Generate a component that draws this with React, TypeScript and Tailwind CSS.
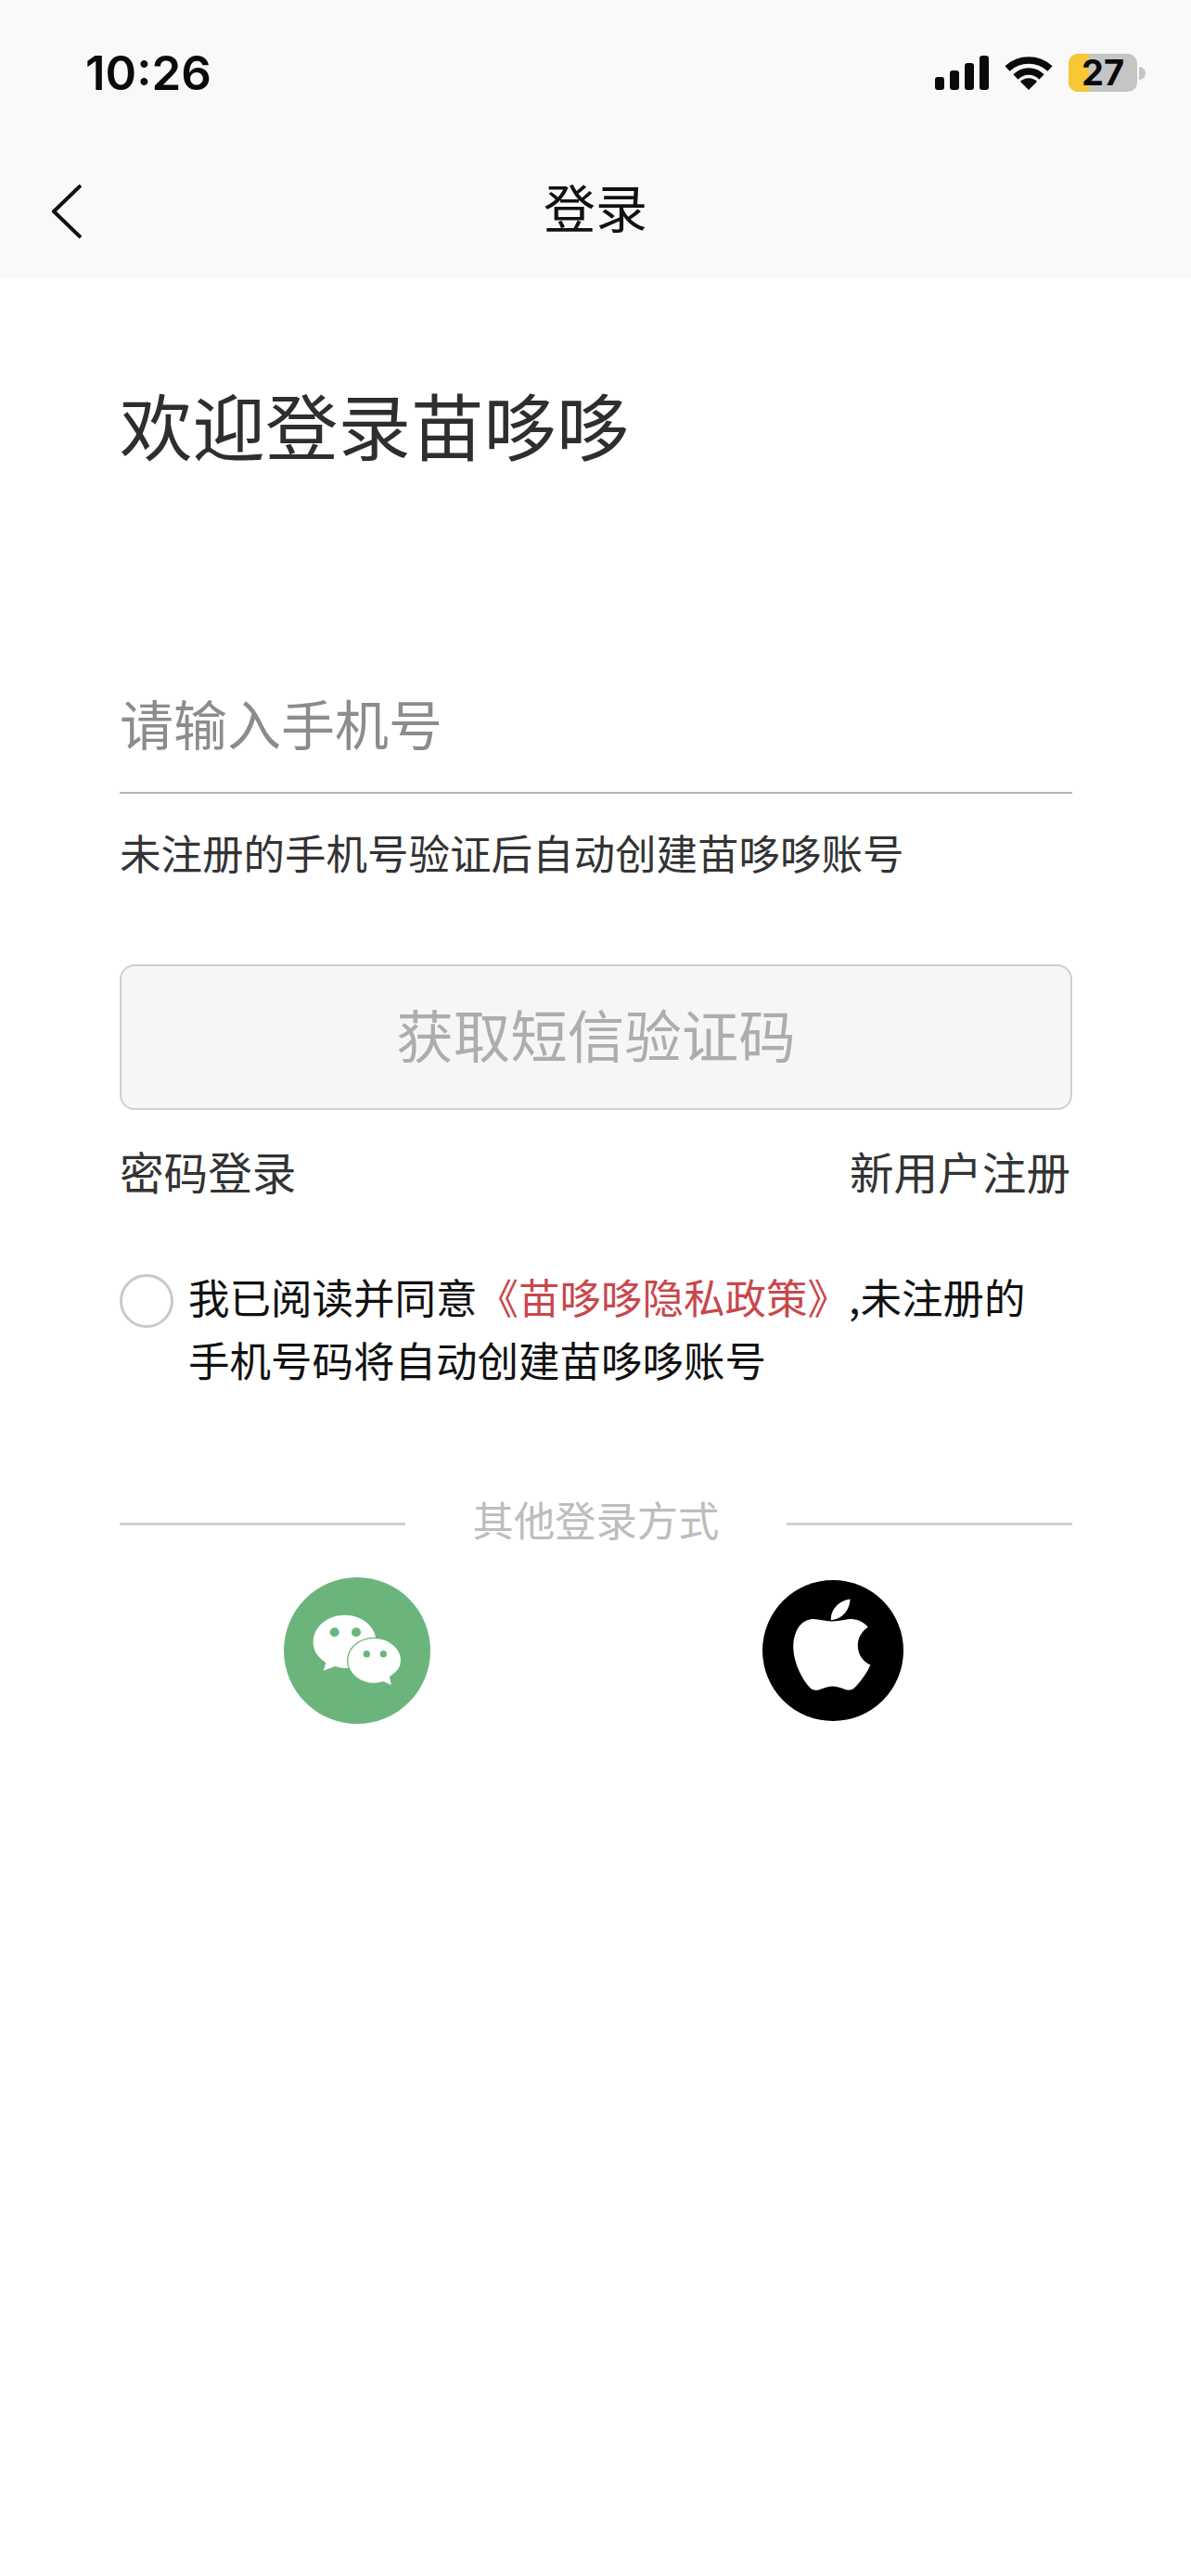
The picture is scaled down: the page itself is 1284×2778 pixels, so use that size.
function SignalIcon() {
  return (
    <svg width="58" height="37" viewBox="0 0 58 37" fill="#0a0a0a">
      <rect x="0" y="23" width="10" height="14" rx="3" />
      <rect x="16" y="16" width="10" height="21" rx="3" />
      <rect x="32" y="8" width="10" height="29" rx="3" />
      <rect x="48" y="0" width="10" height="37" rx="3" />
    </svg>
  );
}

function WifiIcon() {
  return (
    <svg width="52" height="37" viewBox="0 0 52 37" fill="none" stroke="#0a0a0a" strokeWidth="7.5">
      <path d="M3 14 C16 2 36 2 49 14" />
      <path d="M12 23 C20 15 32 15 40 23" />
      <path d="M17 28 L26 37 L35 28 C30 23 22 23 17 28 Z" fill="#0a0a0a" stroke="none" />
    </svg>
  );
}

function Battery() {
  return (
    <div className="flex items-center">
      <div className="relative w-[74px] h-[41px] rounded-[10px] bg-[#c5c5c5] flex items-center justify-center">
        <div className="absolute left-0 top-0 bottom-0 w-[22px] rounded-l-[10px] bg-[#f6c836]" />
        <span className="relative text-[38px] leading-[41px] font-bold text-[#0a0a0a] [font-family:Inter,sans-serif]">27</span>
      </div>
      <div className="w-[7px] h-[14px] ml-[2px] rounded-r-full bg-[#c5c5c5]" />
    </div>
  );
}

function BackChevron() {
  return (
    <svg className="absolute left-[55px] top-[24px]" width="33" height="58" viewBox="0 0 33 58" fill="none" stroke="#111" strokeWidth="4">
      <path d="M32 1 L3 29 L32 57" strokeLinejoin="round" />
    </svg>
  );
}

function WechatLogo() {
  return (
    <svg width="158" height="158" viewBox="48 30 474 474">
      <circle cx="285" cy="267" r="237" fill="#6bb57c" />
      <path d="M245 152 C188 152 143 191 143 240 C143 266 156 288 184 306 L176 332 L214 318 C226 322 236 324 250 324 C300 324 347 290 347 240 C347 191 302 152 245 152 Z" fill="#fff" />
      <path d="M340 226 C290 226 254 260 254 300 C254 340 292 374 340 374 C350 374 360 372 370 369 L398 382 L392 352 C412 340 428 322 428 300 C428 260 390 226 340 226 Z" fill="#fff" stroke="#6bb57c" strokeWidth="4" />
      <circle cx="212" cy="208" r="15" fill="#6bb57c" />
      <circle cx="282" cy="208" r="15" fill="#6bb57c" />
      <circle cx="316" cy="278" r="11" fill="#6bb57c" />
      <circle cx="370" cy="278" r="11" fill="#6bb57c" />
    </svg>
  );
}

function AppleLogo() {
  return (
    <svg width="152" height="152" viewBox="38 38 457 457">
      <circle cx="266.5" cy="266.5" r="228.5" fill="#000" />
      <path d="M262 172 C240 172 215 162 195 165 C160 170 140 205 138 250 C136 300 165 360 195 390 C215 405 235 382 265 382 C295 382 315 405 335 388 C360 365 378 335 388 313 C360 300 347 275 347 250 C347 225 360 205 380 190 C360 168 335 163 315 165 C295 167 280 172 262 172 Z" fill="#fff" />
      <path d="M322 100 C322 130 300 165 260 168 C258 135 285 105 322 100 Z" fill="#fff" />
    </svg>
  );
}

export default function App() {
  return (
    <div className="min-h-[2778px] bg-white text-[#111] [font-family:'Noto_Sans_CJK_SC',sans-serif]">
      {/* Header */}
      <div className="h-[300px] bg-[#f9f9f9] flex flex-col">
        <div className="flex items-center justify-between pl-[92px] pr-[49px] pt-[58px] h-[99px]">
          <span className="text-[51px] leading-none font-semibold text-[#0a0a0a] [font-family:Inter,sans-serif]">10:26</span>
          <div className="flex items-center gap-[17px]">
            <SignalIcon />
            <WifiIcon />
            <Battery />
          </div>
        </div>
        <div className="relative flex items-center justify-center h-[100px] mt-[76px]">
          <BackChevron />
          <h1 className="text-[56px] leading-[70px] font-normal pb-[6px]">登录</h1>
        </div>
      </div>

      {/* Form */}
      <div className="pl-[129px] pr-[128px] pt-[107px]">
        <h2 className="text-[78.5px] leading-[100px] font-normal text-[#2e2e2e]">欢迎登录苗哆哆</h2>

        <div className="mt-[222px] pb-[25px] border-b-2 border-[#b5b5b5]">
          <input
            className="block w-full h-[100px] text-[58px] bg-transparent outline-none placeholder:text-[#8c8c8c]"
            placeholder="请输入手机号"
          />
        </div>
        <p className="mt-[33px] text-[44.5px] leading-[60px] text-[#333]">未注册的手机号验证后自动创建苗哆哆账号</p>

        <button className="mt-[91px] w-full h-[157px] rounded-[16px] border-2 border-[#cfcfcf] bg-[#f6f6f6] text-[61.5px] pb-[7px] text-[#adadad]">
          获取短信验证码
        </button>

        <div className="mt-[36px] pr-[2px] flex justify-between text-[47.6px] leading-[60px] text-[#333]">
          <span>密码登录</span>
          <span>新用户注册</span>
        </div>

        <div className="mt-[71px] flex">
          <div className="w-[58px] h-[58px] mt-[10px] shrink-0 rounded-full border-[3px] border-[#c9c9c9]" />
          <p className="ml-[16px] text-[44.5px] leading-[68px] text-[#111]">
            我已阅读并同意<span className="text-[#c9474c]">《苗哆哆隐私政策》</span>,未注册的
            <br />
            手机号码将自动创建苗哆哆账号
          </p>
        </div>

        <div className="mt-[108px] flex items-center justify-between">
          <div className="w-[308px] h-[3px] bg-[#cfcfcf]" />
          <span className="text-[44.3px] leading-[60px] pb-[10px] text-[#bdbdbd]">其他登录方式</span>
          <div className="w-[308px] h-[3px] bg-[#cfcfcf]" />
        </div>

        <div className="flex mt-[23px] items-center">
          <div className="ml-[177px]"><WechatLogo /></div>
          <div className="ml-[358px]"><AppleLogo /></div>
        </div>
      </div>
    </div>
  );
}
